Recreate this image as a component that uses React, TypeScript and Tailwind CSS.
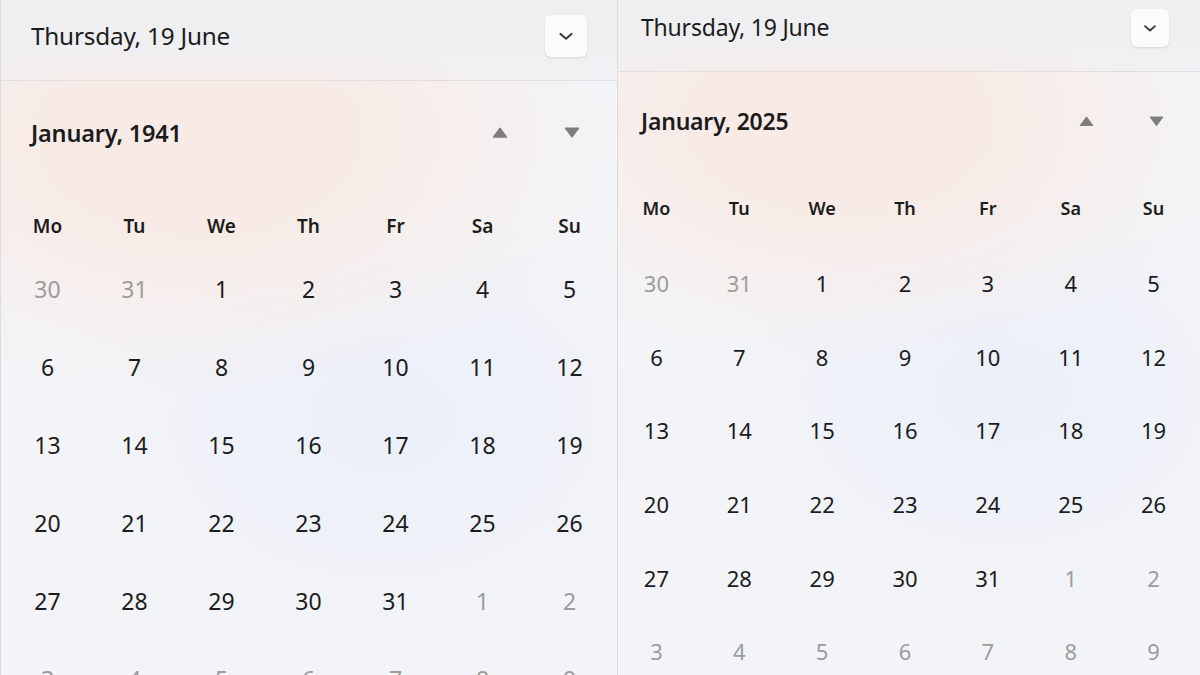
import React from "react";

type Cell = { d: number; out?: boolean };

const weekDays = ["Mo", "Tu", "We", "Th", "Fr", "Sa", "Su"];

// January starting on a Wednesday (true for 1941 and 2025)
const buildMonth = (): Cell[][] => {
  const cells: Cell[] = [{ d: 30, out: true }, { d: 31, out: true }];
  for (let i = 1; i <= 31; i++) cells.push({ d: i });
  let n = 1;
  while (cells.length < 42) cells.push({ d: n++, out: true });
  const rows: Cell[][] = [];
  for (let r = 0; r < 6; r++) rows.push(cells.slice(r * 7, r * 7 + 7));
  return rows;
};

const Chevron = ({ size }: { size: number }) => (
  <svg width={size} height={size} viewBox="0 0 16 16" fill="none">
    <path d="M4 6.5 L8 10 L12 6.5" stroke="#3a3a3a" strokeWidth="1.5" strokeLinecap="round" strokeLinejoin="round" />
  </svg>
);

const Tri = ({ up, w }: { up?: boolean; w: number }) => (
  <svg width={w} height={w * 0.7} viewBox="0 0 14 10">
    {up ? (
      <path d="M7 1 L13 9 L1 9 Z" fill="#7e7e7e" stroke="#7e7e7e" strokeWidth="1" strokeLinejoin="round" />
    ) : (
      <path d="M1 1 L13 1 L7 9 Z" fill="#7e7e7e" stroke="#7e7e7e" strokeWidth="1" strokeLinejoin="round" />
    )}
  </svg>
);

const font = { fontFamily: '"Noto Sans", "Open Sans", sans-serif' };

const App = () => {
  const rows = buildMonth();

  return (
    <div
      className="flex h-[675px] w-[1200px] overflow-hidden bg-[#f3f3f5] text-[#1c1c1c]"
      style={font}
    >
      {/* left picker */}
      <div className="flex w-[618px] shrink-0 flex-col border-l border-r border-[#dcdcdf] bg-[#f3f4f7] bg-[radial-gradient(ellipse_420px_260px_at_32%_20%,#f8eae5_0%,#f8ebe6_35%,rgba(248,235,230,0)_100%),radial-gradient(ellipse_320px_240px_at_62%_62%,#eaeff9_0%,rgba(234,239,249,0)_100%)]">
        <div className="flex h-[81px] shrink-0 items-center justify-between border-b border-[#dfdfe3] bg-[linear-gradient(180deg,#efeff2_0%,#efeff2_50%,rgba(239,239,242,0.4)_100%)] pb-[8px] pl-[30px] pr-[30px]">
          <span className="text-[24.3px] leading-none tracking-[-0.2px]">Thursday, 19 June</span>
          <div className="flex h-[42px] w-[42px] items-center justify-center rounded-[6px] bg-[#fbfbfb] shadow-[0_1px_2px_rgba(0,0,0,0.12)]">
            <Chevron size={22} />
          </div>
        </div>
        <div className="flex h-[121px] shrink-0 items-start justify-between pl-[30px] pr-[9px] pt-[36px]">
          <span className="text-[23.5px] font-semibold leading-[32px] tracking-[-0.2px]">January, 1941</span>
          <div className="flex h-[32px]">
            <div className="flex w-[72px] items-center justify-center"><Tri up w={16} /></div>
            <div className="flex w-[72px] items-center justify-center"><Tri w={16} /></div>
          </div>
        </div>
        <div className="grid h-[48px] shrink-0 grid-cols-7 items-center pl-[3px] pr-[4px]">
          {weekDays.map((w) => (
            <span key={w} className="text-center text-[19px] font-semibold">{w}</span>
          ))}
        </div>
        {rows.map((r, i) => (
          <div key={i} className="grid h-[78px] shrink-0 grid-cols-7 items-center pl-[3px] pr-[4px]">
            {r.map((c, j) => (
              <span key={j} className={`text-center text-[23px] ${c.out ? "text-[#9c9c9c]" : "text-[#1c1c1c]"}`}>{c.d}</span>
            ))}
          </div>
        ))}
      </div>

      {/* right picker */}
      <div className="flex flex-1 flex-col bg-[#f3f4f7] bg-[radial-gradient(ellipse_400px_240px_at_38%_18%,#f8eae5_0%,#f8ebe6_35%,rgba(248,235,230,0)_100%),radial-gradient(ellipse_300px_230px_at_66%_58%,#eaeff9_0%,rgba(234,239,249,0)_100%)]">
        <div className="flex h-[72px] shrink-0 items-center justify-between border-b border-[#dfdfe3] bg-[linear-gradient(180deg,#efeff2_0%,#efeff2_50%,rgba(239,239,242,0.4)_100%)] pb-[16px] pl-[23px] pr-[31px]">
          <span className="text-[23px] leading-none tracking-[-0.2px]">Thursday, 19 June</span>
          <div className="flex h-[38px] w-[38px] items-center justify-center rounded-[6px] bg-[#fbfbfb] shadow-[0_1px_2px_rgba(0,0,0,0.12)]">
            <Chevron size={20} />
          </div>
        </div>
        <div className="flex h-[97px] shrink-0 items-start justify-between pl-[23px] pr-[9px] pt-[34px]">
          <span className="text-[23px] font-semibold leading-[30px] tracking-[-0.2px]">January, 2025</span>
          <div className="flex h-[30px]">
            <div className="flex w-[70px] items-center justify-center"><Tri up w={15} /></div>
            <div className="flex w-[70px] items-center justify-center"><Tri w={15} /></div>
          </div>
        </div>
        <div className="-ml-[3px] grid h-[78px] shrink-0 grid-cols-7 items-center pr-[5px]">
          {weekDays.map((w) => (
            <span key={w} className="text-center text-[18px] font-semibold">{w}</span>
          ))}
        </div>
        {rows.map((r, i) => (
          <div key={i} className="-ml-[3px] grid h-[73.6px] shrink-0 grid-cols-7 items-center pr-[5px]">
            {r.map((c, j) => (
              <span key={j} className={`text-center text-[22px] ${c.out ? "text-[#9c9c9c]" : "text-[#1c1c1c]"}`}>{c.d}</span>
            ))}
          </div>
        ))}
      </div>
    </div>
  );
};

export default App;
